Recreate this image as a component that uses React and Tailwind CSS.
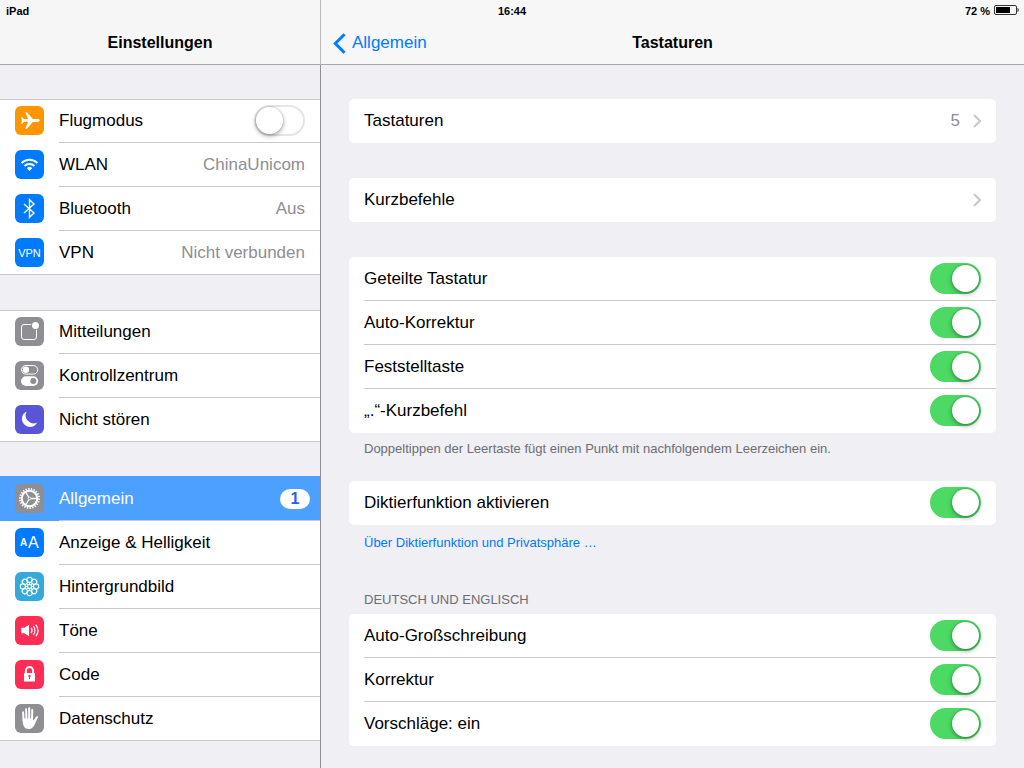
import { useState } from 'react';

const WHITE = { fill: 'none', stroke: '#fff' };
const EIGHTHS = [0, 45, 90, 135, 180, 225, 270, 315];

function Tile({ color, children }) {
  return (
    <svg viewBox="0 0 29 29" className={`size-[29px] shrink-0 rounded-md ${color}`} aria-hidden="true">
      {children}
    </svg>
  );
}

const icons = {
  plane: (
    <Tile color="bg-[#ff9500]">
      <path fill="#fff" d="M24.8 14.5c0-.9-1-1.4-2.4-1.4h-4.6L12 6.3h-1.8l2.9 6.8-4.1.2-1.9-2.4H6.2l.6 3.6-.6 3.6h.9L9 15.7l4.1.2-2.9 6.8H12l5.8-6.8h4.6c1.400 0 2.400-.5 2.400-1.400z" />
    </Tile>
  ),
  wifi: (
    <Tile color="bg-[#007aff]">
      <g {...WHITE} strokeWidth="2">
        <path d="M6.600 13a11.200 11.200 0 0 1 15.800 0" />
        <path d="M9.500 16a7.100 7.100 0 0 1 10 0" />
      </g>
      <path fill="#fff" d="M11.800 18.200a3.800 3.800 0 0 1 5.400 0L14.500 21z" />
    </Tile>
  ),
  bluetooth: (
    <Tile color="bg-[#007aff]">
      <path {...WHITE} strokeWidth="1.400" d="M9 10l10 9-4.500 4.300V5.700L19 10l-10 9" />
    </Tile>
  ),
  vpn: (
    <span className="flex size-[29px] shrink-0 items-center justify-center rounded-md bg-[#007aff] text-[11px] text-white">
      VPN
    </span>
  ),
  notifications: (
    <Tile color="bg-[#8e8e93]">
      <rect {...WHITE} x="6.500" y="7.500" width="15" height="15" rx="2.600" />
      <circle cx="20.500" cy="8.500" r="4.400" fill="#8e8e93" />
      <circle cx="20.500" cy="8.500" r="3.500" fill="#fff" />
    </Tile>
  ),
  control: (
    <Tile color="bg-[#8e8e93]">
      <rect {...WHITE} x="6.500" y="4.500" width="16.200" height="8.600" rx="4.300" />
      <circle cx="10.900" cy="8.800" r="3.200" fill="#fff" />
      <rect x="6" y="15.200" width="17.200" height="9.800" rx="4.900" fill="#fff" />
      <circle cx="18.300" cy="20.100" r="3" fill="#8e8e93" />
    </Tile>
  ),
  moon: (
    <Tile color="bg-[#5856d6]">
      <path fill="#fff" d="M11.700 6.400A8.100 8.100 0 1 0 22.200 17.500 8 8 0 0 1 11.700 6.400z" />
    </Tile>
  ),
  gear: (
    <Tile color="bg-[#8e8e93]">
      <circle {...WHITE} cx="14.500" cy="14.500" r="9.500" strokeWidth="2" pathLength="44" strokeDasharray="1 1" />
      <circle {...WHITE} cx="14.500" cy="14.500" r="7.700" strokeWidth="2" />
      <path {...WHITE} strokeWidth="1.300" d="M16 14.500h6M13.700 13.200l-3-5.200M13.700 15.800l-3 5.200" />
      <circle {...WHITE} cx="14.500" cy="14.500" r="1.300" strokeWidth="1" />
    </Tile>
  ),
  display: (
    <Tile color="bg-[#007aff]">
      <text x="5" y="18" fill="#fff" fontSize="10" fontWeight="700">A</text>
      <text x="13" y="20" fill="#fff" fontSize="16">A</text>
    </Tile>
  ),
  wallpaper: (
    <Tile color="bg-[#34aadc]">
      <g {...WHITE} strokeWidth="1.100">
        {EIGHTHS.map((a) => (
          <circle key={a} cx="14.500" cy="7.900" r="2.600" transform={`rotate(${a} 14.500 14.500)`} />
        ))}
        {EIGHTHS.map((a) => (
          <path key={a} d="M14.500 12.500v-2" transform={`rotate(${a} 14.500 14.500)`} />
        ))}
        <circle cx="14.500" cy="14.500" r="2" />
      </g>
    </Tile>
  ),
  sound: (
    <Tile color="bg-[#ff2d55]">
      <path fill="#fff" d="M6.200 11.700h3.200L14 8.800v11.400l-4.600-2.900H6.200z" />
      <g {...WHITE} strokeWidth="1.200">
        <path d="M16.100 11.900q1.900 2.600 0 5.200" />
        <path d="M18.400 10.200q3.100 4.300 0 8.600" />
        <path d="M20.800 8.600q4.400 5.900 0 11.800" />
      </g>
    </Tile>
  ),
  lock: (
    <Tile color="bg-[#ff2d55]">
      <path {...WHITE} strokeWidth="2" d="M10.900 13.500v-2.800a3.600 3.600 0 0 1 7.200 0v2.800" />
      <rect x="9" y="13" width="11" height="8.500" rx=".6" fill="#fff" />
      <circle cx="14.500" cy="16" r="1.200" fill="#ff2d55" />
      <path fill="#ff2d55" d="M14 16h1v3.200h-1z" />
    </Tile>
  ),
  hand: (
    <Tile color="bg-[#8e8e93]">
      <g {...WHITE} strokeWidth="2" strokeLinecap="round">
        <path d="M8.100 8.200l.5 8M11.100 5.300l.4 10M14.200 4.300v11M17.300 5.900l-.3 10" />
      </g>
      <path fill="#fff" d="M7.500 14.500h10.400l.5 2.300 2.300-3.500c.8-1.100 2.300-1.300 2.600-.6-1.300 2.100-2.200 4.700-3.300 7-1.200 3-3.100 5.300-6.500 5.300-3.800 0-5.800-2.800-6-10.500z" />
    </Tile>
  ),
};

const sidebarGroups = [
  [
    { icon: 'plane', label: 'Flugmodus', toggle: true },
    { icon: 'wifi', label: 'WLAN', value: 'ChinaUnicom' },
    { icon: 'bluetooth', label: 'Bluetooth', value: 'Aus' },
    { icon: 'vpn', label: 'VPN', value: 'Nicht verbunden' },
  ],
  [
    { icon: 'notifications', label: 'Mitteilungen' },
    { icon: 'control', label: 'Kontrollzentrum' },
    { icon: 'moon', label: 'Nicht stören' },
  ],
  [
    { icon: 'gear', label: 'Allgemein', badge: '1', selected: true },
    { icon: 'display', label: 'Anzeige & Helligkeit' },
    { icon: 'wallpaper', label: 'Hintergrundbild' },
    { icon: 'sound', label: 'Töne' },
    { icon: 'lock', label: 'Code' },
    { icon: 'hand', label: 'Datenschutz' },
  ],
];

function Switch({ initial = false }) {
  const [on, setOn] = useState(initial);
  return (
    <input
      type="checkbox"
      role="switch"
      checked={on}
      onChange={() => setOn(!on)}
      className="flex h-[31px] w-[51px] shrink-0 cursor-pointer appearance-none items-center rounded-full border-2 border-[#e5e5e5] bg-white before:size-[27px] before:rounded-full before:bg-white before:shadow-[0_2px_5px_rgba(0,0,0,0.35),0_0_1px_1px_rgba(0,0,0,0.08)] checked:justify-end checked:border-[#4cd964] checked:bg-[#4cd964]"
    />
  );
}

function SidebarRow({ item, last }) {
  const line = last ? 'border-transparent' : 'border-[#c8c7cc]';
  const body = (
    <>
      <span className="flex h-full items-center border-b border-transparent">{icons[item.icon]}</span>
      <span className={`flex h-full grow items-center border-b pr-[15px] ${line}`}>
        <span className="grow text-left">{item.label}</span>
        {item.value && <span className="text-[#8e8e93]">{item.value}</span>}
        {item.toggle && <Switch />}
        {item.badge && (
          <span className="-mr-[5px] flex h-5 w-[30px] items-center justify-center rounded-full bg-white text-base font-bold text-[#2b62e6]">
            {item.badge}
          </span>
        )}
      </span>
    </>
  );
  const shape = 'flex w-full items-center gap-[15px] pl-[15px]';
  if (item.toggle) return <label className={`${shape} h-11`}>{body}</label>;
  if (item.selected) {
    return (
      <button type="button" aria-current="page" className={`${shape} -mt-px h-[45px] bg-[#4ca0ff] pt-px text-white`}>
        {body}
      </button>
    );
  }
  return <button type="button" className={`${shape} h-11`}>{body}</button>;
}

function Chevron() {
  return (
    <svg viewBox="0 0 8 14" className="h-3.5 w-2" aria-hidden="true">
      <path d="M1 1l6 6-6 6" fill="none" stroke="#c7c7cc" strokeWidth="2" />
    </svg>
  );
}

function Card({ children, className = '' }) {
  return <div className={`rounded-[5px] bg-white pl-[15px] ${className}`}>{children}</div>;
}

function SwitchRows({ labels }) {
  return (
    <Card>
      {labels.map((label) => (
        <label
          key={label}
          className="flex h-11 items-center justify-between border-b border-[#c8c7cc] pr-[15px] last:border-transparent"
        >
          {label}
          <Switch initial />
        </label>
      ))}
    </Card>
  );
}

function LinkRow({ label, value }) {
  return (
    <Card>
      <button type="button" className="flex h-11 w-full items-center gap-[13px] border-b border-transparent pr-[15px]">
        <span className="grow text-left">{label}</span>
        {value && <span className="text-[#8e8e93]">{value}</span>}
        <Chevron />
      </button>
    </Card>
  );
}

function StatusBar() {
  return (
    <div className="z-10 col-start-1 row-start-1 grid h-[22px] grid-cols-3 self-start px-1.5 text-[11px] leading-[22px] font-bold">
      <span>iPad</span>
      <span className="text-center">16:44</span>
      <span className="flex justify-end gap-1">
        72 %
        <svg viewBox="0 0 25 10" className="mt-[5px] -mr-px h-2.5 w-[25px]" aria-label="Batterie">
          <rect x=".5" y=".5" width="22" height="9" rx="1.500" fill="none" stroke="#333" />
          <rect x="2" y="2" width="14" height="6" fill="#000" />
          <path d="M23.500 3q1.200 0 1.200 2t-1.200 2z" fill="#222" />
        </svg>
      </span>
    </div>
  );
}

export default function App() {
  return (
    <div className="grid min-h-screen bg-[#efeff4] text-[17px] leading-5 text-black [font-family:'Liberation_Sans',Arial,sans-serif]">
      <StatusBar />
      <div className="col-start-1 row-start-1 flex">
        <aside className="flex w-[321px] shrink-0 flex-col">
          <header className="flex h-[65px] items-center justify-center border-r border-b border-r-[#b9b9bc] border-b-[#a7a7ac] bg-[#f6f6f6] pt-[22px]">
            <h1 className="text-base font-bold">Einstellungen</h1>
          </header>
          <nav className="flex grow flex-col gap-[35px] border-r border-[#8e8e93] pt-[34px]">
            {sidebarGroups.map((group) => (
              <div key={group[0].label} className="bg-white shadow-[inset_0_1px_0_#c8c7cc,inset_0_-1px_0_#c8c7cc]">
                {group.map((item, i) => (
                  <SidebarRow key={item.label} item={item} last={i === group.length - 1} />
                ))}
              </div>
            ))}
          </nav>
        </aside>

        <main className="min-w-0 grow">
          <header className="grid h-[65px] grid-cols-[1fr_auto_1fr] items-center border-b border-[#a7a7ac] bg-[#f7f7f7] px-3 pt-[22px]">
            <a href="#allgemein" className="flex items-center gap-1.5 text-[#007aff]">
              <svg viewBox="0 0 13 21" className="h-[21px] w-[13px]" aria-hidden="true">
                <path d="M11.600 1.200L2.300 10.500l9.300 9.300" fill="none" stroke="#007aff" strokeWidth="3" />
              </svg>
              Allgemein
            </a>
            <h2 className="text-base font-bold">Tastaturen</h2>
          </header>

          <div className="px-7 pt-[34px] pb-5">
            <div className="flex flex-col gap-[35px]">
              <LinkRow label="Tastaturen" value="5" />
              <LinkRow label="Kurzbefehle" />
              <SwitchRows labels={['Geteilte Tastatur', 'Auto-Korrektur', 'Feststelltaste', '„.“-Kurzbefehl']} />
            </div>
            <p className="h-12 px-[15px] pt-1.5 text-[13px] text-[#6d6d72]">
              Doppeltippen der Leertaste fügt einen Punkt mit nachfolgendem Leerzeichen ein.
            </p>
            <SwitchRows labels={['Diktierfunktion aktivieren']} />
            <p className="px-[15px] pt-2 text-[13px]">
              <a href="#datenschutz" className="text-[#007aff]">Über Diktierfunktion und Privatsphäre …</a>
            </p>
            <h3 className="px-[15px] pt-[37px] pb-1 text-[13px] text-[#6d6d72]">DEUTSCH UND ENGLISCH</h3>
            <SwitchRows labels={['Auto-Großschreibung', 'Korrektur', 'Vorschläge: ein']} />
          </div>
        </main>
      </div>
    </div>
  );
}
